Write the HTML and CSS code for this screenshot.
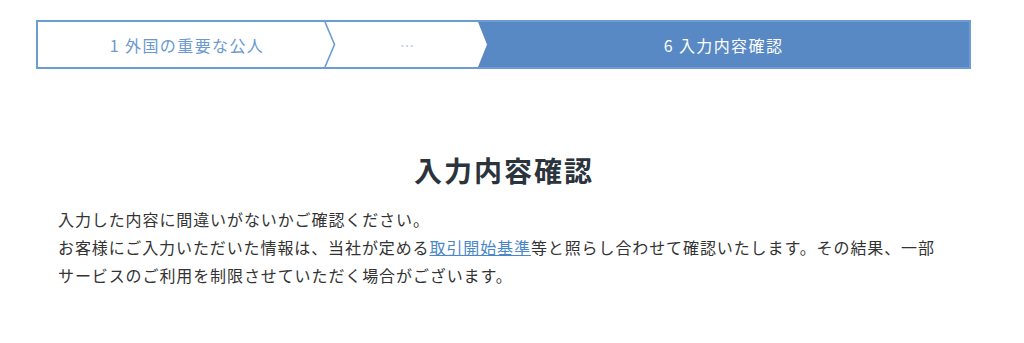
FILE: index.html
```html
<!DOCTYPE html>
<html lang="ja">
<head>
<meta charset="utf-8">
<title>入力内容確認</title>
<link rel="stylesheet" href="styles.css">
</head>
<body>
<div class="page">
  <ol class="steps">
    <li class="step step-first">
      <span class="step-label">1 外国の重要な公人</span>
      <svg class="chev" viewBox="0 0 12 45" preserveAspectRatio="none" aria-hidden="true">
        <polyline points="1,0 10.5,22.5 1,45" fill="none" stroke="#6d9bd4" stroke-width="1.6"/>
      </svg>
    </li>
    <li class="step step-mid"><span class="step-label dots">…</span></li>
    <li class="step step-current"><span class="step-label">6 入力内容確認</span></li>
  </ol>
  <main class="content">
    <h1 class="title">入力内容確認</h1>
    <p class="lead">入力した内容に間違いがないかご確認ください。<br>お客様にご入力いただいた情報は、当社が定める<a href="#" class="link">取引開始基準</a>等と照らし合わせて確認いたします。その結果、一部サービスのご利用を制限させていただく場合がございます。</p>
  </main>
</div>
</body>
</html>
```

FILE: styles.css
```css
html, body {
  margin: 0;
  padding: 0;
  background: #ffffff;
}

body {
  font-family: "Noto Sans CJK JP", "Noto Sans", sans-serif;
  color: #333333;
}

.page {
  width: 1024px;
  height: 343px;
  overflow: hidden;
}

.steps {
  list-style: none;
  margin: 20px 0 0 36px;
  padding: 0;
  width: 935px;
  height: 49px;
  box-sizing: border-box;
  border: 2px solid #6d9bd4;
  display: flex;
  background: #ffffff;
}

.step {
  display: flex;
  align-items: center;
  justify-content: center;
  height: 100%;
  font-size: 16px;
  letter-spacing: 1.4px;
  color: #6b98cf;
}

.step-first {
  position: relative;
  width: 298px;
  flex: none;
}

.chev {
  position: absolute;
  right: 0;
  top: 0;
  width: 12px;
  height: 100%;
}

.step-mid {
  width: 142px;
  flex: none;
}

.dots {
  color: #a3bfe2;
  font-size: 14px;
  letter-spacing: 0;
}

.step-current {
  flex: 1;
  background: #5889c4;
  color: #ffffff;
  clip-path: polygon(0 0, 100% 0, 100% 100%, 0 100%, 9px 50%);
}

.content {
  margin: 0 0 0 58px;
  width: 892px;
}

.title {
  margin: 81px 0 0;
  font-size: 28px;
  line-height: 40px;
  font-weight: 700;
  letter-spacing: 2px;
  text-align: center;
  color: #2b333d;
}

.lead {
  margin: 15px 0 0;
  font-size: 16px;
  line-height: 28px;
  letter-spacing: 0.9px;
  color: #333333;
}

.link {
  color: #4a87c8;
  text-decoration: underline;
}
```
